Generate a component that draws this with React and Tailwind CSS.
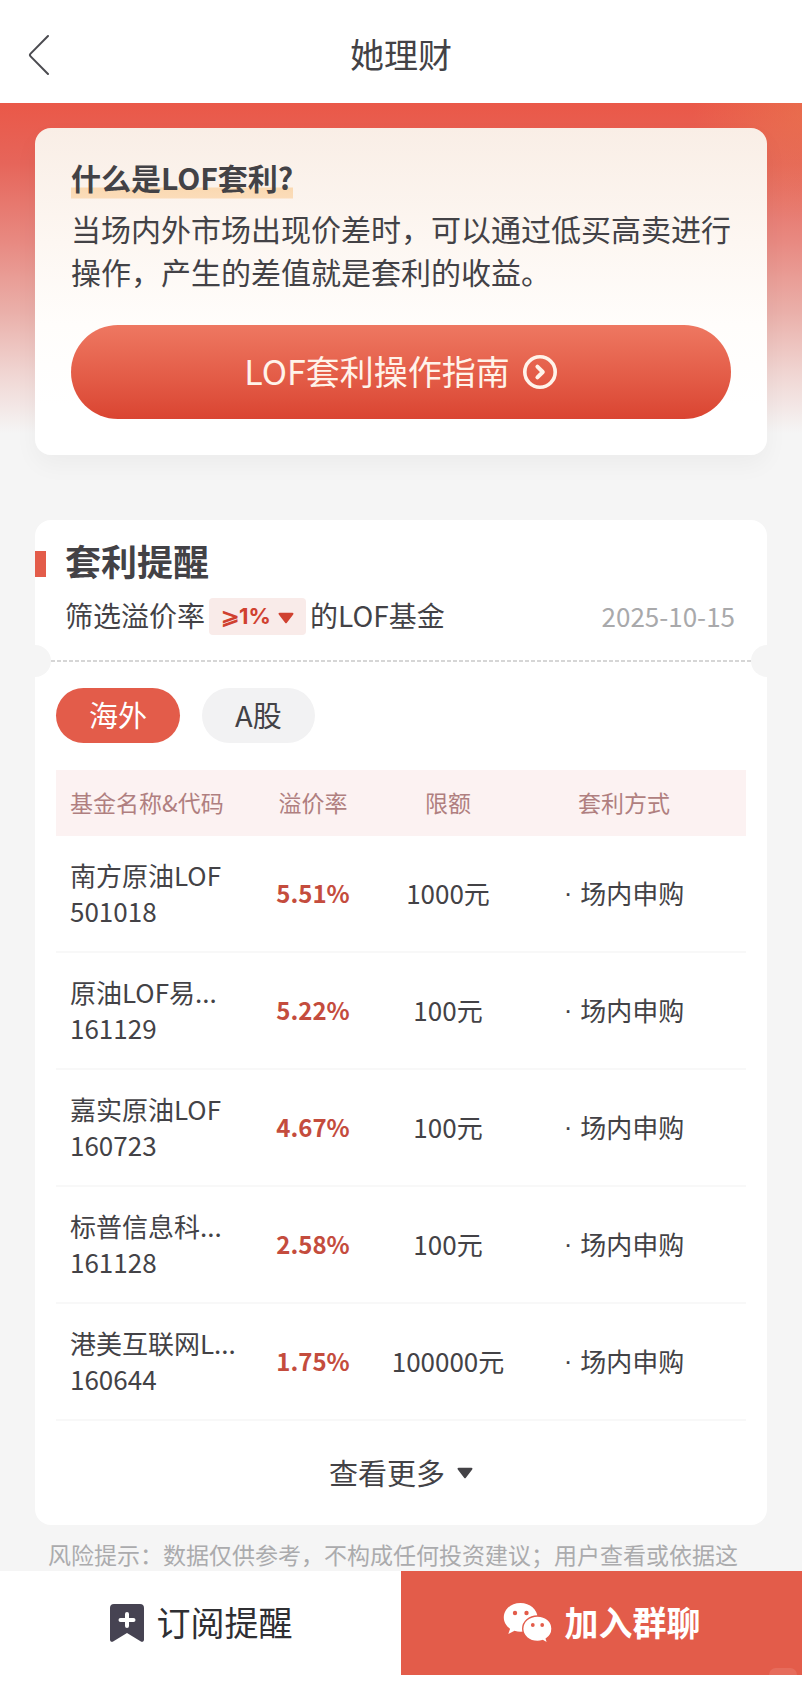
import React, { useState } from "react";

const funds = [
  { name: "南方原油LOF", code: "501018", rate: "5.51%", limit: "1000元" },
  { name: "原油LOF易...", code: "161129", rate: "5.22%", limit: "100元" },
  { name: "嘉实原油LOF", code: "160723", rate: "4.67%", limit: "100元" },
  { name: "标普信息科...", code: "161128", rate: "2.58%", limit: "100元" },
  { name: "港美互联网L...", code: "160644", rate: "1.75%", limit: "100000元" },
];

const tabs = ["海外", "A股"];

const BackIcon = () => (
  <svg width="22" height="42" viewBox="0 0 22 42" fill="none">
    <path
      d="M20 2 2.6 19.6a2 2 0 0 0 0 2.8L20 40"
      stroke="#4b4b50"
      strokeWidth="2"
      strokeLinecap="round"
    />
  </svg>
);

const CircleArrowIcon = () => (
  <svg width="36" height="36" viewBox="0 0 36 36" fill="none">
    <circle cx="18" cy="18" r="15.2" stroke="#fff3ea" strokeWidth="3.6" />
    <path
      d="m15.4 12.6 5.4 5.4-5.4 5.4"
      stroke="#fff3ea"
      strokeWidth="4"
      strokeLinecap="round"
      strokeLinejoin="round"
    />
  </svg>
);

const Triangle = ({ className }) => (
  <svg width="16" height="12" viewBox="0 0 16 12" className={className}>
    <path
      d="M1.6.8h12.8c1 0 1.4.9.8 1.6L8.9 10.7c-.5.7-1.3.7-1.8 0L.8 2.4C.2 1.7.6.8 1.6.8Z"
      fill="currentColor"
    />
  </svg>
);

const BookmarkIcon = () => (
  <svg width="36" height="40" viewBox="0 0 36 40">
    <path
      d="M5 1h26a4 4 0 0 1 4 4v31.5c0 2.2-1.9 3-3.5 1.8L18 30 4.5 38.3C2.9 39.5 1 38.7 1 36.5V5a4 4 0 0 1 4-4Z"
      fill="#464352"
    />
    <path
      d="M18 11v12M11.5 17h13"
      stroke="#fff"
      strokeWidth="4"
      strokeLinecap="round"
    />
  </svg>
);

const WechatIcon = () => (
  <svg width="50" height="42" viewBox="0 0 50 42">
    <path
      d="M17.5 1C8 1 .8 7.4.8 15.5c0 4.6 2.4 8.5 6.3 11.2L5.3 32l6.2-3.2c2 .6 4 .9 6 .9 9.5 0 17-6.3 17-14.2S27 1 17.5 1Z"
      fill="#fff"
    />
    <circle cx="12" cy="11" r="2.2" fill="#e35c4a" />
    <circle cx="23.5" cy="11" r="2.2" fill="#e35c4a" />
    <path
      d="M34.5 14C26 14 19.7 19.7 19.7 26.7S26 39.4 34.5 39.4c1.8 0 3.5-.3 5.1-.8l5.2 2.8-1.5-4.6c3.5-2.3 5.7-5.9 5.7-10.1C49 19.7 43 14 34.5 14Z"
      fill="#fff"
      stroke="#e35c4a"
      strokeWidth="1.4"
    />
    <circle cx="29.8" cy="23" r="1.9" fill="#e35c4a" />
    <circle cx="39.2" cy="23" r="1.9" fill="#e35c4a" />
  </svg>
);

const App = () => {
  const [activeTab, setActiveTab] = useState("海外");
  const [minRate, setMinRate] = useState("1");

  return (
    <div className="flex flex-col h-screen bg-[#f5f5f5] text-[#434246] font-['Noto_Sans_CJK_SC',sans-serif]">
      <header className="relative flex items-center justify-center h-[103px] shrink-0 pt-1 bg-white">
        <button aria-label="返回" className="absolute left-7 top-[34px]">
          <BackIcon />
        </button>
        <h1 className="text-[34px] leading-[44px]">她理财</h1>
      </header>

      <main className="flex-1 min-h-0 overflow-y-auto [scrollbar-width:none]">
        <section className="px-[35px] pt-[25px] pb-[65px] bg-[radial-gradient(circle_at_100%_10px,rgba(232,125,80,0.5),transparent_110px),linear-gradient(to_bottom,#ea5848_0px,#e6655a_60px,#e88a82_140px,#eab0aa_210px,#f0d5d2_270px,#f5f5f5_330px)]">
          <div className="px-9 pt-7 pb-9 rounded-2xl shadow-[0_10px_24px_rgba(0,0,0,0.04)] bg-[linear-gradient(to_bottom,#f9eee6_0%,#fdf7f2_35%,#fffdfb_60%,#ffffff_85%)]">
            <h2 className="inline-block text-[30px] leading-[43px] font-bold bg-[linear-gradient(to_bottom,transparent_31px,#fad9b2_32px,#fbdcb9_42px,transparent_43px)]">
              什么是LOF套利?
            </h2>
            <p className="mt-2 text-[30px] leading-[43px]">
              当场内外市场出现价差时，可以通过低买高卖进行操作，产生的差值就是套利的收益。
            </p>
            <button className="flex items-center justify-center gap-3 w-full h-[94px] mt-8 rounded-full text-[34px] leading-[44px] text-[#fff3ea] bg-linear-to-b from-[#ee7761] to-[#da4431]">
              <span className="pb-[2px]">LOF套利操作指南</span>
              <CircleArrowIcon />
            </button>
          </div>
        </section>

        <section className="mx-[35px] pt-[18px] rounded-2xl bg-white">
          <div className="relative">
            <span className="absolute left-0 top-[13px] w-[11px] h-[26px] bg-[#e35c4a]" />
            <h2 className="pl-[30px] text-[36px] leading-[44px] font-bold">
              套利提醒
            </h2>
          </div>

          <div className="flex items-center justify-between pl-[30px] pr-8 mt-[15px]">
            <div className="flex items-center text-[28px] leading-[37px]">
              <label htmlFor="min-rate" className="pb-[2px]">
                筛选溢价率
              </label>
              <span className="relative mx-1 text-[#d04130]">
                <select
                  id="min-rate"
                  value={minRate}
                  onChange={(e) => setMinRate(e.target.value)}
                  className="block appearance-none w-[97px] h-[37px] pl-3 rounded bg-[#f9ebe9] text-[22px] font-bold font-['Inter','Noto_Sans_CJK_SC',sans-serif]"
                >
                  <option value="1">⩾1%</option>
                  <option value="2">⩾2%</option>
                  <option value="3">⩾3%</option>
                </select>
                <Triangle className="absolute right-3 top-[14px] pointer-events-none" />
              </span>
              <span className="pb-[2px]">的LOF基金</span>
            </div>
            <time className="pb-[2px] text-[26px] leading-[37px] text-[#a9a9ab]">
              2025-10-15
            </time>
          </div>

          {/* ticket style divider */}
          <div className="flex items-center h-8 mt-[9px] overflow-hidden">
            <span className="w-4 h-8 rounded-r-full bg-[#f5f5f5]" />
            <span className="flex-1 h-[2px] bg-[repeating-linear-gradient(to_right,#d6d6d6_0px,#d6d6d6_4px,transparent_4px,transparent_6px)]" />
            <span className="w-4 h-8 rounded-l-full bg-[#f5f5f5]" />
          </div>

          <div className="flex gap-[22px] px-[21px] mt-[11px]">
            {tabs.map((tab) => (
              <button
                key={tab}
                onClick={() => setActiveTab(tab)}
                className={`h-[55px] px-[33px] pb-[2px] rounded-full text-[29px] ${
                  activeTab === tab
                    ? "bg-[#e35c4a] text-white"
                    : "bg-[#f2f2f3] text-[#434246]"
                }`}
              >
                {tab}
              </button>
            ))}
          </div>

          <div className="px-[21px] mt-[27px]">
            <table className="w-full table-fixed border-separate border-spacing-0">
              <thead>
                <tr className="h-[66px] bg-[#fcf2f2] text-[23px] text-[#b07f80]">
                  <th className="w-[190px] pl-[14px] pb-[2px] text-left font-normal">
                    基金名称&代码
                  </th>
                  <th className="w-[134px] pb-[2px] font-normal">溢价率</th>
                  <th className="w-[136px] pb-[2px] font-normal">限额</th>
                  <th className="pr-[14px] pb-[2px] font-normal">套利方式</th>
                </tr>
              </thead>
              <tbody>
                {funds.map((fund) => (
                  <tr
                    key={fund.code}
                    className="h-[117px] text-[26px] leading-9 text-center"
                  >
                    <td className="pl-[14px] pb-[2px] text-left whitespace-nowrap border-b-2 border-[#f8f8f8]">
                      <div>{fund.name}</div>
                      <div>{fund.code}</div>
                    </td>
                    <td className="pb-[2px] text-2xl font-bold text-[#c44c3d] border-b-2 border-[#f8f8f8]">
                      {fund.rate}
                    </td>
                    <td className="pb-[2px] border-b-2 border-[#f8f8f8]">
                      {fund.limit}
                    </td>
                    <td className="pr-[14px] pb-[2px] border-b-2 border-[#f8f8f8]">
                      <div className="flex items-center justify-center gap-2">
                        <span className="font-['Liberation_Sans',sans-serif]">
                          ·
                        </span>
                        场内申购
                      </div>
                    </td>
                  </tr>
                ))}
              </tbody>
            </table>
          </div>

          <button className="flex items-center justify-center gap-3 w-full h-[104px] text-[29px] leading-[44px]">
            <span className="pb-[2px]">查看更多</span>
            <Triangle />
          </button>
        </section>

        <p className="px-12 pt-[14px] text-[23px] leading-[30px] text-[#ababad] whitespace-nowrap">
          风险提示：数据仅供参考，不构成任何投资建议；用户查看或依据这
        </p>
      </main>

      <footer className="grid grid-cols-2 shrink-0 pb-[13px] bg-white text-[34px] leading-[44px]">
        <button className="flex items-center justify-center gap-3 h-[104px] text-[#2f2f33]">
          <BookmarkIcon />
          <span className="pb-[2px]">订阅提醒</span>
        </button>
        <button className="relative flex items-center justify-center gap-3 h-[104px] overflow-hidden bg-[#e35c4a] text-white font-bold">
          <WechatIcon />
          <span className="pb-[2px]">加入群聊</span>
          <span className="absolute right-[5px] bottom-0 w-7 h-[7px] rounded-t-lg bg-white/10" />
        </button>
      </footer>
    </div>
  );
};

export default App;
